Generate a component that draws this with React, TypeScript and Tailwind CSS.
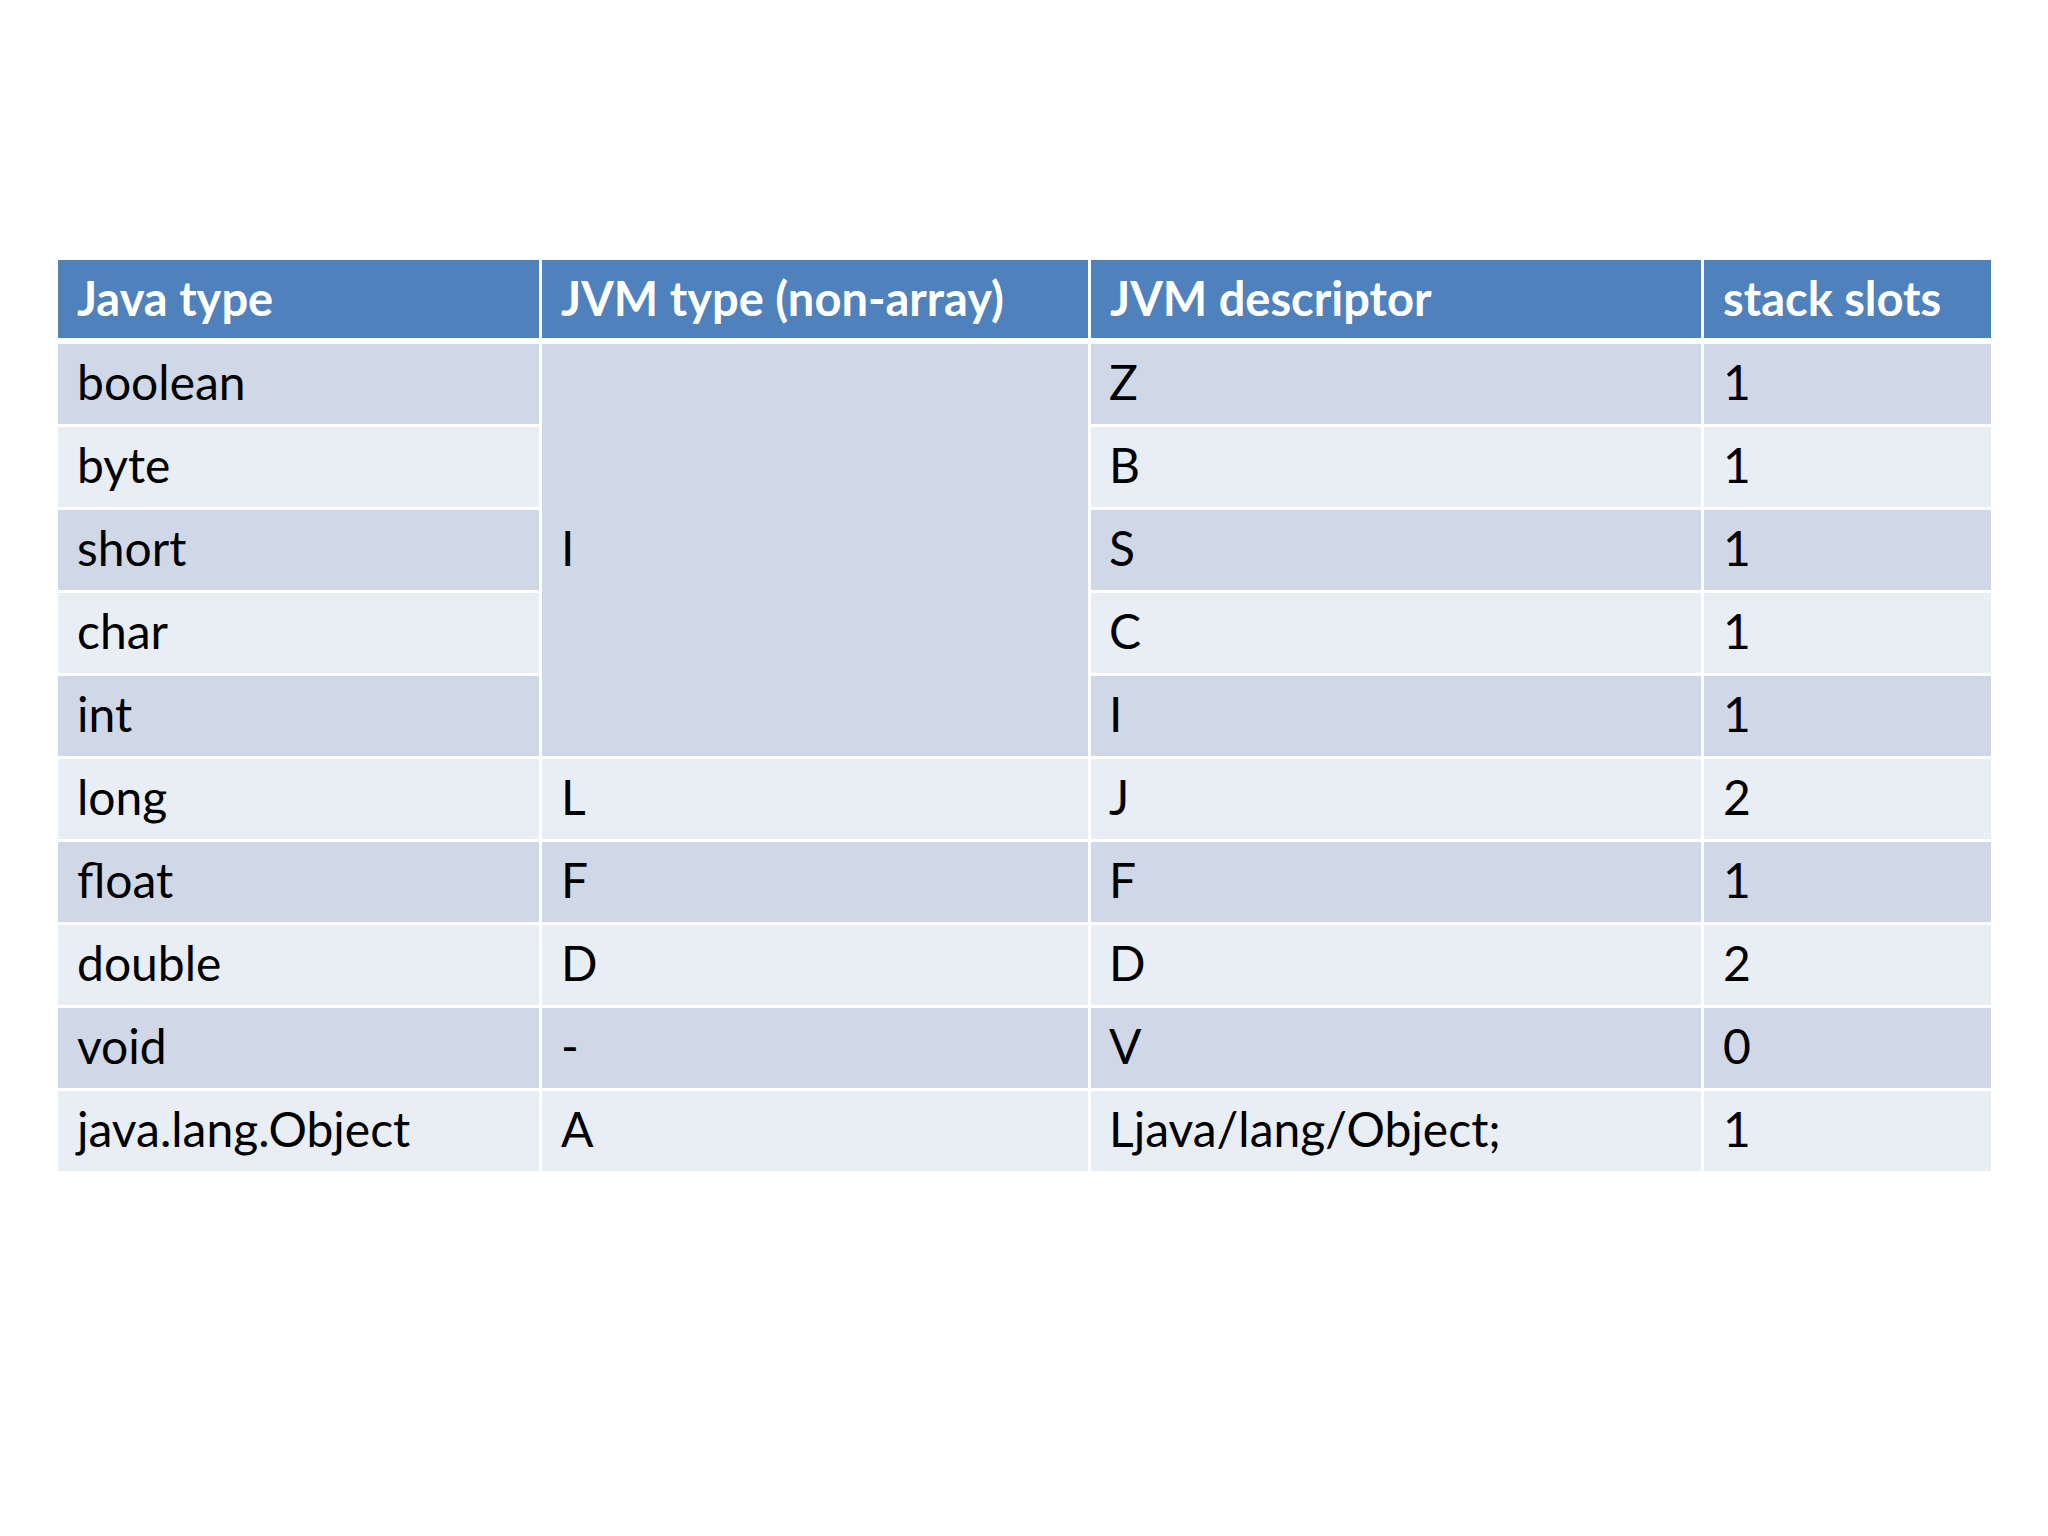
const rows = [
  { java: 'boolean', jvm: null, desc: 'Z', slots: '1' },
  { java: 'byte', jvm: null, desc: 'B', slots: '1' },
  { java: 'short', jvm: null, desc: 'S', slots: '1' },
  { java: 'char', jvm: null, desc: 'C', slots: '1' },
  { java: 'int', jvm: null, desc: 'I', slots: '1' },
  { java: 'long', jvm: 'L', desc: 'J', slots: '2' },
  { java: 'float', jvm: 'F', desc: 'F', slots: '1' },
  { java: 'double', jvm: 'D', desc: 'D', slots: '2' },
  { java: 'void', jvm: '-', desc: 'V', slots: '0' },
  { java: 'java.lang.Object', jvm: 'A', desc: 'Ljava/lang/Object;', slots: '1' },
];

const headers = ['Java type', 'JVM type (non-array)', 'JVM descriptor', 'stack slots'];

export default function App() {
  return (
    <div className="w-full h-[1536px] bg-white pt-[260px] pl-[58px] font-['Lato',sans-serif] text-[48px] text-black">
      <div className="grid grid-cols-[481px_546px_610px_287px] gap-x-[3px] h-[78px]">
        {headers.map((h) => (
          <div key={h} className="bg-[#4f81bd] text-white text-[47px] font-bold flex items-center pl-[19px] pb-[1px]">
            {h}
          </div>
        ))}
      </div>

      <div className="grid grid-cols-[481px_546px_610px_287px] grid-rows-[repeat(10,80px)] gap-[3px] mt-[6px]">
        {rows.map((r, i) => {
          const bg = i % 2 === 0 ? 'bg-[#d0d8e8]' : 'bg-[#e9edf4]';
          return [
            <div key={`a${i}`} className={`${bg} flex items-center pl-[19px] pb-[5px]`}>{r.java}</div>,
            i === 0 ? (
              <div key="merged" className="bg-[#d0d8e8] row-span-5 flex items-center pl-[19px] pb-[5px]">I</div>
            ) : r.jvm !== null ? (
              <div key={`b${i}`} className={`${bg} flex items-center pl-[19px] pb-[5px]`}>{r.jvm}</div>
            ) : null,
            <div key={`c${i}`} className={`${bg} flex items-center pl-[18px] pb-[5px]`}>{r.desc}</div>,
            <div key={`d${i}`} className={`${bg} flex items-center pl-[19px] pb-[5px]`}>{r.slots}</div>,
          ];
        })}
      </div>
    </div>
  );
}
